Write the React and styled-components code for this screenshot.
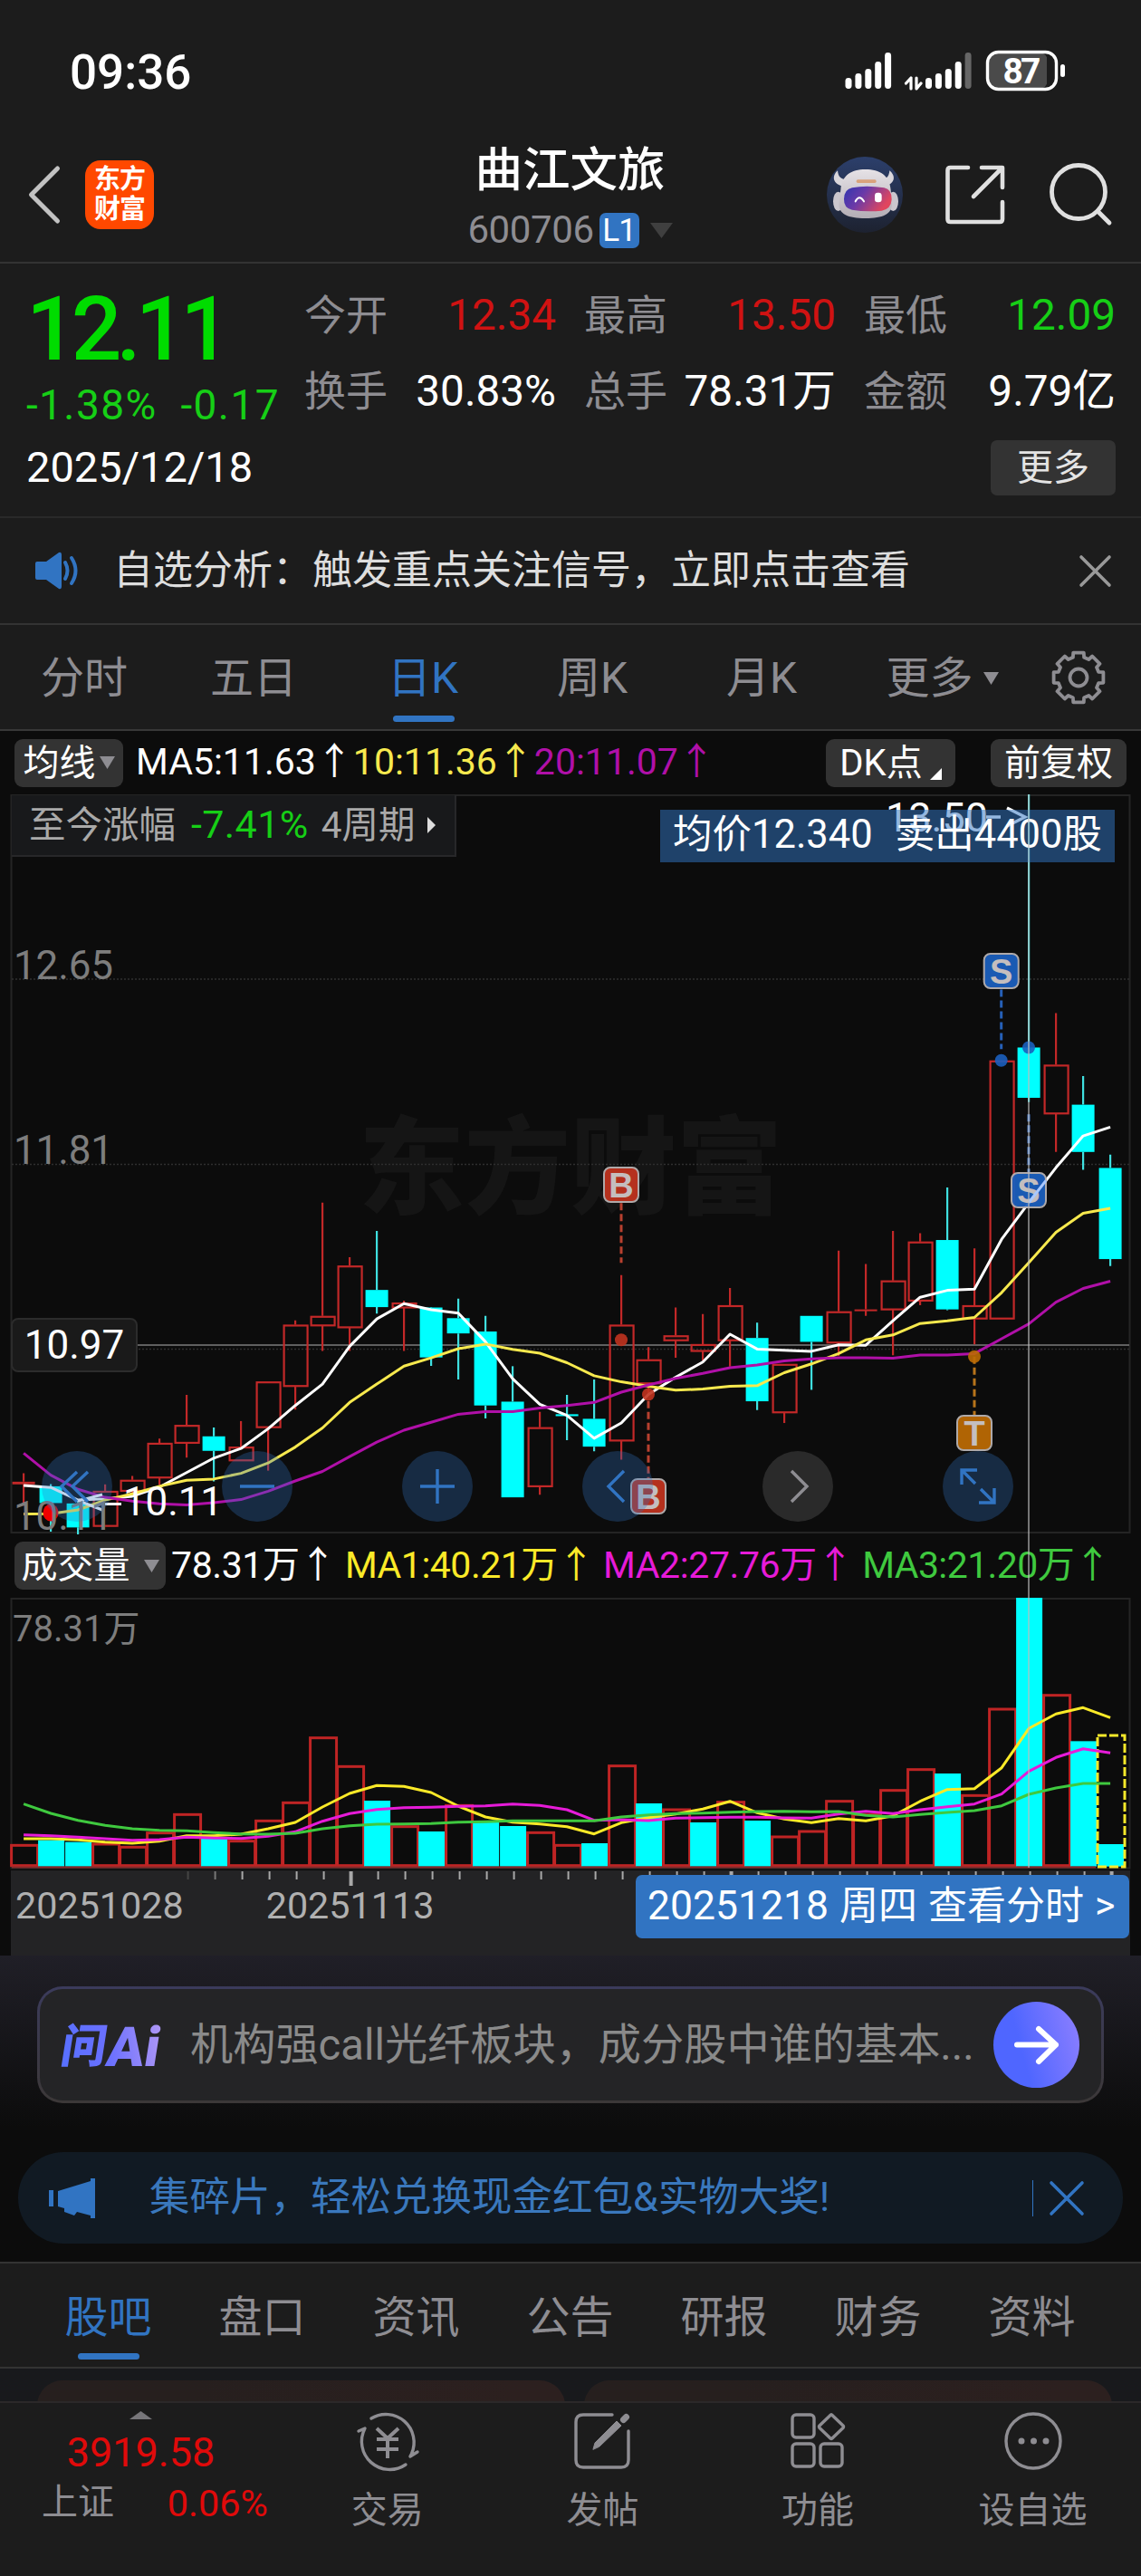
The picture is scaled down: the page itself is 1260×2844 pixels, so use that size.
import React from "react";
import styled, { createGlobalStyle } from "styled-components";

const BLUE = "#3174c2";
const RED = "#c22828";
const CYAN = "#00ffff";
const GREY = "#8e8d92";

const Global = createGlobalStyle`
  * { box-sizing: border-box; }
  body {
    margin: 0;
    background: #1c1c1c;
    color: #fff;
    font-family: Roboto, "Noto Sans CJK SC", sans-serif;
    -webkit-font-smoothing: antialiased;
  }
  svg { display: block; flex: none; overflow: visible; }
  svg text { font-family: Roboto, "Noto Sans CJK SC", sans-serif; }
`;

const Page = styled.div`
  width: 1260px;
  height: 2844px;
  overflow: hidden;
  display: flex;
  flex-direction: column;
  background: #1c1c1c;
  white-space: nowrap;
`;

const Text = styled.span`
  font-size: ${(p) => p.$size || 41}px;
  line-height: ${(p) => p.$line || 1.2};
  color: ${(p) => p.$color || "#fff"};
  font-weight: ${(p) => p.$weight || 400};
  letter-spacing: ${(p) => p.$track || 0}px;
`;

/* ---------- status bar ---------- */

const StatusBar = styled.div`
  height: 140px;
  padding: 0 84px 0 77px;
  display: flex;
  justify-content: space-between;
`;

const Clock = styled(Text)`
  padding-top: 49px;
`;

const StatusIcons = styled.div`
  padding-top: 52px;
`;

const BAR_TOPS = [34, 29, 24, 16, 6];

function Signal({ x, dim }) {
  return BAR_TOPS.map((top, i) => (
    <rect
      key={i}
      x={x + i * 10.9}
      y={top}
      width="7"
      height={46 - top}
      rx="3.4"
      fill={dim && i === 4 ? "#666" : "#fff"}
    />
  ));
}

function StatusGlyphs() {
  return (
    <svg width="246" height="52" viewBox="0 0 246 52">
      <Signal x={3.5} />
      <Signal x={92} dim />
      <path d="M76 34v12M76 34l-5.500 6M82 34v12l5-6" stroke="#fff" strokeWidth="3.200" fill="none" strokeLinecap="round" strokeLinejoin="round" />
      <rect x="161" y="6" width="66" height="40" rx="9" fill="#4a4a4a" />
      <rect x="226" y="8" width="8" height="36" fill="#1c1c1c" />
      <rect x="160.500" y="5.500" width="76" height="41" rx="12" fill="none" stroke="#fff" strokeWidth="3.400" />
      <rect x="241" y="19" width="5" height="14" rx="2.500" fill="#fff" />
      <text x="198.500" y="40" textAnchor="middle" fontSize="39" fontWeight="700" fill="#fff" textLength="42">87</text>
    </svg>
  );
}

/* ---------- title header ---------- */

const Header = styled.header`
  height: 151px;
  padding: 0 31px;
  display: grid;
  grid-template-columns: 1fr auto 1fr;
  align-items: center;
  border-bottom: 2px solid #333;
`;

const HeaderLeft = styled.div`
  display: flex;
  align-items: center;
  gap: 28px;
`;

const HeaderRight = styled.div`
  display: flex;
  align-items: center;
  justify-content: flex-end;
  gap: 47px;
`;

const BrandTile = styled.div`
  width: 76px;
  height: 76px;
  border-radius: 17px;
  background: #ff4800;
  display: flex;
  flex-direction: column;
  align-items: center;
  justify-content: center;
  font-size: 29px;
  line-height: 33px;
  font-weight: 700;
  letter-spacing: -1px;
`;

const TitleBlock = styled.div`
  padding: 13px 1px 0 0;
  display: flex;
  flex-direction: column;
  align-items: center;
`;

const CodeRow = styled.div`
  height: 66px;
  display: flex;
  align-items: center;
`;

const LevelBadge = styled.span`
  margin: 0 12px 0 6px;
  width: 44px;
  height: 39px;
  border-radius: 7px;
  background: ${BLUE};
  font-size: 35px;
  line-height: 39px;
  text-align: center;
  letter-spacing: -1px;
`;

function Caret({ w = 17, h = 14, color = GREY, up }) {
  return (
    <svg width={w} height={h}>
      <path d={up ? `M0 ${h}L${w / 2} 0L${w} ${h}Z` : `M0 0H${w}L${w / 2} ${h}Z`} fill={color} />
    </svg>
  );
}

function BackIcon() {
  return (
    <svg width="35" height="64" viewBox="0 0 35 64">
      <path d="M32.500 3L3.500 32L32.500 61" fill="none" stroke="#c2c2c2" strokeWidth="5" strokeLinecap="round" strokeLinejoin="round" />
    </svg>
  );
}

function RobotIcon() {
  return (
    <svg width="84" height="84" viewBox="0 0 252 252">
      <defs>
        <linearGradient id="rbg" x1="0" y1="0" x2="0" y2="1">
          <stop offset="0" stopColor="#2c3f6b" />
          <stop offset="1" stopColor="#1d2230" />
        </linearGradient>
        <linearGradient id="visor" x1="0" y1="0" x2="1" y2="0.4">
          <stop offset="0" stopColor="#2f35b0" />
          <stop offset="0.45" stopColor="#6a3aa8" />
          <stop offset="1" stopColor="#e0465e" />
        </linearGradient>
        <linearGradient id="shell" x1="0" y1="0" x2="0" y2="1">
          <stop offset="0" stopColor="#e6e2e6" />
          <stop offset="1" stopColor="#b3adb5" />
        </linearGradient>
      </defs>
      <circle cx="126" cy="126" r="126" fill="url(#rbg)" />
      <path d="M54 98C22 92 14 66 36 46c2 22 12 30 34 30zM190 98c34-6 42-32 18-52c-2 22-12 30-34 30z" fill="#d9d6db" />
      <ellipse cx="38" cy="148" rx="17" ry="32" fill="#cbc7ce" />
      <ellipse cx="220" cy="148" rx="17" ry="32" fill="#cbc7ce" />
      <path d="M46 110C50 62 80 42 128 42s80 20 84 68l4 46c0 34-30 48-88 48s-88-14-88-48z" fill="url(#shell)" />
      <rect x="98" y="76" width="66" height="11" rx="5" fill="#d9a27c" />
      <path d="M84 103Q130 94 190 103Q216 108 215 142Q213 174 182 179Q130 184 84 176Q56 170 57 140Q58 108 84 103Z" fill="url(#visor)" />
      <path d="M95 148q13-24 28 0" fill="none" stroke="#fff" strokeWidth="6" strokeLinecap="round" />
      <rect x="159" y="119" width="23" height="32" rx="10" fill="#fff" />
    </svg>
  );
}

function ShareIcon() {
  return (
    <svg width="68" height="68" viewBox="1 0 68 68">
      <path
        d="M26 4H6.500Q3.500 4 3.500 7V61Q3.500 64 6.500 64H61Q64 64 64 61V42M41 4H64V26M63 5L32 36"
        fill="none" stroke="#e0e0e0" strokeWidth="4.600" strokeLinecap="round" strokeLinejoin="round"
      />
    </svg>
  );
}

function SearchIcon() {
  return (
    <svg width="70" height="70" viewBox="0 0 70 70">
      <circle cx="32" cy="32" r="29.500" fill="none" stroke="#e0e0e0" strokeWidth="4.800" />
      <path d="M53 53L66 66" stroke="#e0e0e0" strokeWidth="4.800" strokeLinecap="round" />
    </svg>
  );
}

/* ---------- quote ---------- */

const Quote = styled.section`
  height: 281px;
  padding: 16px 28px 0 29px;
  border-bottom: 2px solid #292929;
`;

const QuoteTop = styled.div`
  display: flex;
  height: 174px;
`;

const PriceCol = styled.div`
  width: 307px;
  padding-top: 7px;
  display: flex;
  flex-direction: column;
`;

const ChangeRow = styled.div`
  display: flex;
  gap: 26px;
  height: 68px;
  align-items: center;
`;

const StatGrid = styled.div`
  flex: 1;
  height: 168px;
  display: grid;
  grid-template-columns: repeat(3, 1fr);
  grid-template-rows: 84px 84px;
  column-gap: 31px;
`;

const Stat = styled.div`
  display: flex;
  justify-content: space-between;
  align-items: center;
`;

const QuoteBottom = styled.div`
  height: 70px;
  display: flex;
  justify-content: space-between;
  align-items: center;
`;

const MoreButton = styled.button`
  border: 0;
  width: 138px;
  height: 61px;
  border-radius: 7px;
  background: #333;
  color: #e4e4e4;
  font: 400 40px/61px Roboto, "Noto Sans CJK SC", sans-serif;
  padding: 0;
`;

const STATS = [
  ["今开", "12.34", "#d01212"],
  ["最高", "13.50", "#d01212"],
  ["最低", "12.09", "#16cf16"],
  ["换手", "30.83%", "#fff"],
  ["总手", "78.31万", "#fff"],
  ["金额", "9.79亿", "#fff"],
];

/* ---------- notice ---------- */

const Notice = styled.div`
  height: 118px;
  padding: 0 33px 0 38px;
  display: flex;
  align-items: center;
  border-bottom: 2px solid #333;
`;

const NoticeText = styled(Text)`
  flex: 1;
  margin-left: 37px;
`;

function Cross({ size, color }) {
  return (
    <svg width={size} height={size}>
      <path d={`M2 2L${size - 2} ${size - 2}M${size - 2} 2L2 ${size - 2}`} stroke={color} strokeWidth="3.600" strokeLinecap="round" />
    </svg>
  );
}

function SpeakerIcon() {
  return (
    <svg width="50" height="42" viewBox="0 0 50 42">
      <path d="M3 11H13L27 1Q30 0 30 4V38Q30 42 27 41L13 31H3Q1 31 1 29V13Q1 11 3 11Z" fill={BLUE} />
      <path d="M34 12Q39 21 34 30M41 7Q50 21 41 35" fill="none" stroke={BLUE} strokeWidth="4" strokeLinecap="round" />
    </svg>
  );
}

/* ---------- tabs ---------- */

const PeriodTabs = styled.nav`
  height: 117px;
  display: grid;
  grid-template-columns: repeat(6, 187px) 138px;
  border-bottom: 2px solid #383838;
`;

const FeedTabs = styled.nav`
  height: 118px;
  padding: 0 35px;
  display: grid;
  grid-template-columns: repeat(7, 1fr);
  border-top: 2px solid #333;
  border-bottom: 2px solid #333;
`;

const Tab = styled.div`
  position: relative;
  display: flex;
  align-items: center;
  justify-content: center;
  gap: 11px;
  padding: ${(p) => p.$drop || 3}px ${(p) => (p.$shift ? 0 : 1)}px 0 ${(p) => (p.$shift ? 24 : 0)}px;
  font-size: 48px;
  line-height: 60px;
  color: ${(p) => (p.$active ? BLUE : GREY)};
  &::after {
    content: "";
    display: ${(p) => (p.$active ? "block" : "none")};
    position: absolute;
    bottom: 8px;
    left: calc(50% - 34px);
    width: 68px;
    height: 7px;
    border-radius: 4px;
    background: ${BLUE};
  }
`;

function gearPath(c, outer, inner) {
  const pts = [];
  for (let k = 0; k < 8; k++) {
    const a = (k * Math.PI) / 4 - Math.PI / 2;
    [[-0.27, inner], [-0.21, outer], [0.21, outer], [0.27, inner]].forEach(([d, r]) => {
      pts.push(`${(c + r * Math.cos(a + d)).toFixed(1)} ${(c + r * Math.sin(a + d)).toFixed(1)}`);
    });
  }
  return `M${pts.join("L")}Z`;
}

function GearIcon() {
  return (
    <svg width="62" height="62" viewBox="0 0 62 62">
      <path d={gearPath(31, 28, 23)} fill="none" stroke={GREY} strokeWidth="3.800" strokeLinejoin="round" />
      <circle cx="31" cy="31" r="9.500" fill="none" stroke={GREY} strokeWidth="3.800" />
    </svg>
  );
}

/* ---------- chart ---------- */

const ChartArea = styled.section`
  background: #0c0c0c;
`;

const Legend = styled.div`
  height: ${(p) => p.$h}px;
  padding: 0 16px;
  display: flex;
  align-items: center;
`;

const Chip = styled.div`
  width: ${(p) => p.$w}px;
  height: 53px;
  margin-left: ${(p) => p.$ml || 0}px;
  margin-right: ${(p) => p.$mr || 0}px;
  border-radius: 9px;
  background: #333;
  display: flex;
  align-items: center;
  justify-content: center;
  gap: ${(p) => p.$gap || 0}px;
  font-size: 40px;
  line-height: 53px;
`;

const Corner = styled.i`
  align-self: flex-end;
  margin-bottom: 8px;
  width: 0;
  height: 0;
  border-left: 13px solid transparent;
  border-bottom: 13px solid #fff;
`;

const Spring = styled.div`
  flex: 1;
`;

const Plot = styled.div`
  position: relative;
`;

const Crosshair = styled.div`
  position: absolute;
  left: 1135px;
  top: 0;
  width: 2px;
  height: 1185px;
  background: rgba(190, 190, 190, 0.6);
`;

const RangeBox = styled.div`
  position: absolute;
  left: 13px;
  top: 1px;
  width: 491px;
  height: 68px;
  padding-left: 19px;
  display: flex;
  align-items: center;
  background: #18191b;
  border: 2px solid #272729;
  border-width: 0 2px 2px 0;
`;

const RangeValue = styled(Text)`
  margin: 0 14px 0 17px;
`;

const RangeCount = styled(Text)`
  margin-right: 12px;
`;

const TradeTip = styled.div`
  position: absolute;
  left: 729px;
  top: 17px;
  width: 502px;
  height: 58px;
  padding: 0 14px;
  display: flex;
  justify-content: space-between;
  background: rgba(49, 116, 194, 0.52);
  font-size: 43.5px;
  line-height: 56px;
`;

const PriceTag = styled.div`
  position: absolute;
  left: 12px;
  top: 578px;
  width: 140px;
  height: 60px;
  border: 2px solid #2c2c2c;
  border-radius: 8px;
  background: #1a1a1a;
  font-size: 44px;
  line-height: 56px;
  text-align: center;
`;

const ChartControls = styled.div`
  position: absolute;
  left: 46px;
  top: 725px;
  display: flex;
  gap: 121px;
`;

const RoundButton = styled.div`
  width: 78px;
  height: 78px;
  border-radius: 50%;
  background: ${(p) => (p.$grey ? "rgba(112,112,112,.3)" : "rgba(49,116,194,.3)")};
  svg path {
    fill: none;
    stroke: ${(p) => (p.$grey ? "#8e8d92" : BLUE)};
    stroke-width: 3.4;
  }
`;

const CONTROLS = [
  { d: "M39 23L22 39L39 56M51 23L34 39L51 56" },
  { d: "M20 39H58" },
  { d: "M20 39H58M39 20V58" },
  { d: "M46 22L29 39L46 56" },
  { d: "M32 22L49 39L32 56", grey: true },
  { d: "M21 37V21H38M22 22L36 36M57 41V57H40M56 56L42 42" },
];

/* [direction, high, body top, body bottom, low] */
const CANDLES = [
  ["u", 1370, 1392, 1399, 1455], ["d", 1398, 1404, 1448, 1523], ["d", 1440, 1449, 1512, 1530],
  ["u", 1399, 1416, 1508, 1508], ["u", 1377, 1387, 1416, 1425], ["u", 1279, 1290, 1381, 1400],
  ["u", 1164, 1243, 1290, 1329], ["d", 1250, 1273, 1311, 1391], ["u", 1233, 1300, 1336, 1336],
  ["u", 1129, 1129, 1249, 1363], ["u", 969, 980, 1141, 1203], ["u", 660, 957, 982, 1049],
  ["u", 803, 825, 987, 1049], ["d", 734, 889, 934, 951], ["u", 917, 922, 935, 1049],
  ["d", 934, 935, 1066, 1088], ["d", 912, 963, 1003, 1124], ["d", 957, 998, 1192, 1226],
  ["d", 1089, 1182, 1433, 1433], ["u", 1209, 1249, 1404, 1426], ["d", 1164, 1215, 1220, 1283],
  ["d", 1124, 1227, 1300, 1312], ["u", 850, 980, 1284, 1334], ["u", 1039, 1071, 1134, 1160],
  ["u", 935, 1008, 1021, 1067], ["u", 952, 1031, 1049, 1074], ["u", 884, 929, 1021, 1090],
  ["d", 975, 1015, 1181, 1204], ["u", 1083, 1083, 1210, 1238], ["d", 957, 957, 1025, 1151],
  ["u", 786, 945, 1027, 1062], ["u", 821, 940, 941, 957], ["u", 734, 864, 940, 1060],
  ["u", 740, 762, 917, 929], ["d", 620, 758, 940, 942], ["u", 780, 929, 964, 1032],
  ["u", 287, 287, 964, 964], ["d", -411, 253, 385, 396], ["u", 163, 298, 426, 527],
  ["d", 328, 403, 527, 574], ["d", 534, 569, 808, 826],
];

const MA5 = [1402, 1407, 1440, 1437, 1430, 1406, 1368, 1330, 1305, 1253, 1192, 1136, 1037, 965, 925, 941, 950, 1025, 1122, 1189, 1218, 1278, 1238, 1163, 1118, 1078, 1005, 1044, 1047, 1050, 1033, 1034, 970, 908, 890, 887, 756, 660, 568, 485, 462];
const MA10 = [1477, 1476, 1466, 1440, 1424, 1404, 1388, 1385, 1370, 1343, 1301, 1251, 1184, 1136, 1089, 1067, 1043, 1031, 1045, 1055, 1080, 1114, 1130, 1142, 1152, 1149, 1142, 1140, 1106, 1083, 1056, 1020, 1007, 977, 970, 961, 896, 817, 738, 688, 675];
const MA20 = [1317, 1375, 1412, 1433, 1443, 1450, 1453, 1447, 1439, 1417, 1390, 1365, 1326, 1288, 1257, 1236, 1215, 1208, 1208, 1199, 1192, 1184, 1157, 1138, 1121, 1108, 1093, 1086, 1075, 1070, 1067, 1067, 1068, 1060, 1060, 1056, 1017, 978, 921, 885, 866];

const VOLUMES = [
  ["u", 1042], ["d", 1025], ["d", 1031], ["u", 1038], ["u", 1048], ["u", 1001], ["u", 940], ["d", 1020],
  ["u", 1028], ["u", 961], ["u", 901], ["u", 686], ["u", 781], ["d", 894], ["u", 980], ["d", 996],
  ["u", 910], ["d", 966], ["d", 978], ["u", 1000], ["u", 1042], ["d", 1035], ["u", 779], ["d", 903],
  ["u", 924], ["d", 966], ["u", 899], ["d", 960], ["u", 1014], ["u", 996], ["u", 896], ["u", 940],
  ["u", 860], ["u", 791], ["d", 804], ["u", 877], ["u", 591], ["d", 222], ["u", 545], ["d", 697], ["d", 1038],
];

const VMA5 = [1020, 1020, 1024, 1031, 1035, 1028, 1010, 1010, 1005, 987, 966, 915, 870, 844, 847, 867, 912, 948, 965, 971, 980, 1004, 967, 950, 938, 922, 896, 934, 955, 967, 953, 961, 944, 896, 857, 854, 785, 655, 607, 586, 619];
const VMA10 = [1007, 1010, 1015, 1020, 1025, 1023, 1015, 1018, 1019, 1012, 997, 962, 937, 923, 917, 916, 913, 911, 905, 910, 924, 959, 957, 960, 952, 950, 949, 949, 951, 952, 938, 929, 937, 924, 914, 905, 872, 797, 751, 722, 736];
const VMA20 = [905, 936, 959, 976, 987, 992, 994, 1000, 1004, 1005, 1002, 987, 977, 972, 971, 970, 965, 964, 961, 961, 961, 961, 948, 941, 937, 935, 932, 930, 929, 931, 930, 943, 948, 940, 933, 927, 911, 873, 852, 837, 837];

const cx = (i) => 26.1 + i * 30;
const priceY = (v) => v / 2.376 + 173;
const volumeY = (v) => v / 3 - 74;
const line = (data, y) => data.map((v, i) => `${cx(i).toFixed(1)},${y(v).toFixed(1)}`).join(" ");

function Candle({ i, c: [dir, hi, top, bottom, lo] }) {
  const x = cx(i);
  const up = dir === "u";
  const t = priceY(top);
  const b = priceY(bottom);
  const color = up ? RED : CYAN;
  const thin = b - t < 3.5;
  return (
    <g stroke={color} strokeWidth="2.2">
      <path d={`M${x} ${priceY(hi)}V${t}M${x} ${b}V${priceY(lo)}`} stroke={up ? RED : "#3fe0e0"} />
      {thin ? (
        <rect x={x - 12.5} y={t} width="25" height={Math.max(2, b - t)} fill={color} stroke="none" />
      ) : up ? (
        <rect x={x - 12.5} y={t + 1} width="26" height={b - t - 1} fill="none" />
      ) : (
        <rect x={x - 12.5} y={t} width="25" height={b - t} fill={color} stroke="none" />
      )}
    </g>
  );
}

const MARKS = [
  { t: "B", x: 686, box: 411, dot: [686, 1020], from: 661, to: 818, fill: "#c0331f", line: "#b8402f" },
  { t: "B", x: 716, box: 755, dot: [716, 1163], from: 1180, to: 1384, fill: "#c0331f", line: "#b8402f" },
  { t: "S", x: 1105.7, box: 175, dot: [1105.7, 287], from: 101, to: 257, fill: "#1b5fbe", line: "#2660b8" },
  { t: "S", x: 1136, box: 417, dot: [1136, 253], from: 428, to: 580, fill: "#1b5fbe", line: "#4a7fd0" },
  { t: "T", x: 1076, box: 685, dot: [1076, 1064], from: 1064, to: 1217, fill: "#bb6a04", line: "#b8741a" },
];

const MarkLetter = styled.text`
  && { font-family: "Liberation Sans", Arial, sans-serif; }
  font-size: 38px;
  font-weight: 700;
  fill: #c4bebe;
`;

function Mark({ m }) {
  return (
    <g>
      <path d={`M${m.x} ${priceY(m.from)}V${priceY(m.to)}`} stroke={m.line} strokeWidth="3" strokeDasharray="8 4" />
      <circle cx={m.dot[0]} cy={priceY(m.dot[1])} r="7" fill={m.fill} opacity="0.9" />
      <rect x={m.x - 19} y={m.box + 1} width="38" height="38" rx="7" fill={m.fill} stroke="#b9b3b3" strokeWidth="2" opacity="0.94" />
      <MarkLetter x={m.x} y={m.box + 33.5} textAnchor="middle">{m.t}</MarkLetter>
    </g>
  );
}

function PriceChart() {
  return (
    <svg width="1260" height="816" viewBox="0 0 1260 816">
      <text x="396" y="454" fontSize="117" fontWeight="900" fill="#151515">东方财富</text>
      <path d="M12.500 1H1247.500V815H12.500Z" fill="none" stroke="#242424" strokeWidth="2" />
      <path d="M13 204H1247M13 408.500H1247M13 612.500H1247" stroke="#2f2f2f" strokeWidth="1.500" strokeDasharray="2 2" />
      <path d="M151 608H1247" stroke="#7d7d7d" strokeWidth="1.600" />
      {CANDLES.map((c, i) => <Candle key={i} i={i} c={c} />)}
      <g fill="none" strokeWidth="3" strokeLinejoin="round">
        <polyline points={line(MA5, priceY)} stroke="#fff" />
        <polyline points={line(MA10, priceY)} stroke="#f7e94e" />
        <polyline points={line(MA20, priceY)} stroke="#b010a8" />
      </g>
      {MARKS.map((m, i) => <Mark key={i} m={m} />)}
      <path d={`M1136 ${priceY(660)}L1155 ${priceY(602)}`} stroke="#a9c8ff" strokeWidth="3" />
      <ellipse cx="56" cy="793" rx="8.500" ry="9.500" fill="#f00000" />
      <path d="M113 773L87 780L113 790M116 783.500H134" fill="none" stroke="#fff" strokeWidth="3" />
      <g fontSize="44" fill="#7d7d7d">
        <text x="15" y="204" textLength="110">12.65</text>
        <text x="15" y="408" textLength="110">11.81</text>
        <text x="15" y="812" textLength="110">10.11</text>
      </g>
      <text x="136" y="796" fontSize="44" fill="#fff" textLength="110">10.11</text>
      <text x="978" y="41" fontSize="45" fill="#fff">13.50</text>
      <path d="M1089 25H1105M1112 15L1132 25L1112 35" fill="none" stroke="#fff" strokeWidth="3.400" />
    </svg>
  );
}

function VolumeChart() {
  const base = volumeY(1112);
  return (
    <svg width="1260" height="301" viewBox="0 0 1260 301">
      <path d="M12.500 1H1247.500V298.500H12.500Z" fill="none" stroke="#242424" strokeWidth="2" />
      {VOLUMES.map(([dir, v], i) => {
        const y = volumeY(v);
        return dir === "u" ? (
          <rect key={i} x={cx(i) - 13.5} y={y} width="29" height={base - y - 1} fill="none" stroke="#bf2424" strokeWidth="3" />
        ) : (
          <rect key={i} x={cx(i) - 14} y={y} width="29" height={base - y} fill={CYAN} />
        );
      })}
      <path d="M13 297.500H1210" stroke="#8c2b2b" strokeWidth="2" />
      <rect x="1212" y="152" width="30" height="145" fill="none" stroke="#f7e92a" strokeWidth="3" strokeDasharray="10 3" />
      <g fill="none" strokeWidth="3" strokeLinejoin="round">
        <polyline points={line(VMA5, volumeY)} stroke="#fbea28" />
        <polyline points={line(VMA10, volumeY)} stroke="#e61bd8" />
        <polyline points={line(VMA20, volumeY)} stroke="#3fc93f" />
      </g>
      <text x="14" y="48" fontSize="40" fill="#7d7d7d">78.31万</text>
    </svg>
  );
}

const Axis = styled.div`
  position: relative;
  height: 94px;
  margin: 0 12px;
  background: #232325;
`;

const AxisDates = styled.div`
  height: 78px;
  margin-top: -16px;
  padding-left: 5px;
  display: flex;
  align-items: center;
  gap: 91px;
`;

const DayButton = styled.div`
  position: absolute;
  right: 1px;
  top: 5px;
  width: 545px;
  height: 70px;
  border-radius: 7px;
  background: ${BLUE};
  padding-left: 13px;
  display: flex;
  gap: 12px;
`;

function Ticks() {
  return (
    <svg width="1236" height="17" viewBox="12 0 1236 17">
      {VOLUMES.map((_, i) => {
        if (i < 6) return null;
        const major = i === 12 || i === 26 || i === 40;
        return (
          <rect
            key={i}
            x={cx(i) + 0.5 - (major ? 1 : 0)}
            y="1"
            width={major ? 4 : 2}
            height={i === 12 ? 16 : 9}
            fill={i === 6 ? "#444" : i === 7 ? "#777" : "#a8a8a8"}
          />
        );
      })}
    </svg>
  );
}

/* ---------- assistant and promo ---------- */

const Promo = styled.section`
  height: 338px;
  padding: 34px 20px 0;
  background: linear-gradient(#201f27, #0c0c0c 190px);
`;

const AskCard = styled.div`
  height: 129px;
  margin: 0 21px 54px;
  padding: 0 24px 0 23px;
  border: 3px solid transparent;
  border-radius: 28px;
  background: linear-gradient(#242426, #242426) padding-box, linear-gradient(#3b3b5c, #3c3838) border-box;
  display: flex;
  align-items: center;
`;

const AskText = styled(Text)`
  width: 884px;
  margin-left: 21px;
  padding-top: 2px;
`;

const GoButton = styled.div`
  width: 95px;
  height: 95px;
  margin-left: auto;
  border-radius: 50%;
  background: linear-gradient(75deg, #4f66ff 35%, #8f80ff);
`;

const Banner = styled.div`
  height: 101px;
  padding: 0 43px 0 34px;
  border-radius: 50px;
  background: #111a23;
  display: flex;
  align-items: center;
`;

const BannerText = styled(Text)`
  flex: 1;
  margin-left: 60px;
`;

const Divider = styled.i`
  width: 1px;
  height: 40px;
  margin-right: 18px;
  background: ${BLUE};
`;

function AskLogo() {
  return (
    <svg width="122" height="72" viewBox="0 -6 122 72">
      <defs>
        <linearGradient id="ask" gradientUnits="userSpaceOnUse" x1="0" y1="40" x2="112" y2="10">
          <stop offset="0" stopColor="#5570ff" />
          <stop offset="0.5" stopColor="#6a70ff" />
          <stop offset="1" stopColor="#ad96f5" />
        </linearGradient>
      </defs>
      <g transform="skewX(-9)" fill="url(#ask)" fontWeight="900">
        <text x="6" y="49" fontSize="51" textLength="50" lengthAdjust="spacingAndGlyphs">问</text>
        <text x="57" y="53" fontSize="61" textLength="58" lengthAdjust="spacingAndGlyphs">Ai</text>
      </g>
    </svg>
  );
}

function MegaphoneIcon() {
  return (
    <svg width="51" height="44" viewBox="0 0 51 44" fill={BLUE}>
      <path d="M0 13H5V31H0ZM10 14L46 3V0H51V44H46V41L31 37L28 41L17 37V33L10 31Z" />
    </svg>
  );
}

/* ---------- feed preview ---------- */

const FeedStrip = styled.div`
  height: 36px;
  padding: 13px 32px 0 41px;
  display: flex;
  gap: 21px;
  overflow: hidden;
  background: #18191c;
`;

const FeedCard = styled.div`
  flex: 1;
  height: 80px;
  border-radius: 28px;
  background: linear-gradient(90deg, #261f1e 30%, #2c201f 90%);
`;

/* ---------- bottom bar ---------- */

const BottomBar = styled.footer`
  height: 193px;
  border-top: 2px solid #2b2829;
  display: grid;
  grid-template-columns: 309px repeat(4, 237.6px);
`;

const IndexCell = styled.div`
  display: flex;
  flex-direction: column;
  align-items: center;
  padding: 9px 0 0 2px;
`;

const IndexRow = styled.div`
  width: 307px;
  margin-top: -6px;
  padding: 0 13px 0 44px;
  display: flex;
  justify-content: space-between;
`;

const NavItem = styled.div`
  display: flex;
  flex-direction: column;
  align-items: center;
  padding-top: 5px;
  gap: 10px;
`;

const NAV = [
  ["交易", (
    <g key="t">
      <path d="M19 12A31 31 0 0 1 63.500 51L62 54M57 63A31 31 0 0 1 12 23L5 26M62 54L70 49" />
      <path d="M25 23L37 34L49 23M25 35H49M25 46H49M37 34V56" strokeWidth="4" strokeLinecap="butt" />
    </g>
  )],
  ["发帖", (
    <g key="p">
      <path d="M48 8H16Q8 8 8 16V58Q8 66 16 66H58Q66 66 66 58V26" />
      <path d="M27 46L29 39L53 15L58 20L34 43Z" fill={GREY} strokeWidth="1" />
      <path d="M60.500 13.500L63.500 10.500" strokeWidth="7" />
    </g>
  )],
  ["功能", (
    <g key="f">
      <rect x="9" y="8" width="24" height="25" rx="4" />
      <rect x="9" y="40" width="24" height="25" rx="4" />
      <rect x="40" y="40" width="24" height="25" rx="4" />
      <path d="M51 8.500Q52 7 53 8.500L65 20Q66 21 65 22.500L53 34Q52 35 51 34L39 22.500Q38 21 39 20Z" />
    </g>
  )],
  ["设自选", (
    <g key="m">
      <circle cx="37" cy="37" r="30" />
      <g fill={GREY} stroke="none">
        <circle cx="24" cy="37" r="3.500" />
        <circle cx="37.500" cy="37" r="3.500" />
        <circle cx="51" cy="37" r="3.500" />
      </g>
    </g>
  )],
];

export default function App() {
  return (
    <Page>
      <Global />
      <StatusBar>
        <Clock $size={53} $weight={500}>09:36</Clock>
        <StatusIcons><StatusGlyphs /></StatusIcons>
      </StatusBar>

      <Header>
        <HeaderLeft>
          <BackIcon />
          <BrandTile><span>东方</span><span>财富</span></BrandTile>
        </HeaderLeft>
        <TitleBlock>
          <Text $size={52.5} $line="66px" $weight={500}>曲江文旅</Text>
          <CodeRow>
            <Text $size={42} $color={GREY} $track={-0.4}>600706</Text>
            <LevelBadge>L1</LevelBadge>
            <Caret w={25} h={17} color="#3f3f3f" />
          </CodeRow>
        </TitleBlock>
        <HeaderRight>
          <RobotIcon />
          <ShareIcon />
          <SearchIcon />
        </HeaderRight>
      </Header>

      <Quote>
        <QuoteTop>
          <PriceCol>
            <Text $size={98} $line="100px" $color="#00dc00" $weight={500} $track={-6}>12.11</Text>
            <ChangeRow>
              <Text $size={46} $color="#16cf16" $track={1.4}>-1.38%</Text>
              <Text $size={46} $color="#16cf16" $track={1.4}>-0.17</Text>
            </ChangeRow>
          </PriceCol>
          <StatGrid>
            {STATS.map(([label, value, color]) => (
              <Stat key={label}>
                <Text $size={46} $color={GREY}>{label}</Text>
                <Text $size={47.7} $color={color}>{value}</Text>
              </Stat>
            ))}
          </StatGrid>
        </QuoteTop>
        <QuoteBottom>
          <Text $size={47}>2025/12/18</Text>
          <MoreButton>更多</MoreButton>
        </QuoteBottom>
      </Quote>

      <Notice>
        <SpeakerIcon />
        <NoticeText $size={44} $color="#dedede">自选分析：触发重点关注信号，立即点击查看</NoticeText>
        <Cross size={35} color="#999" />
      </Notice>

      <PeriodTabs>
        <Tab>分时</Tab>
        <Tab>五日</Tab>
        <Tab $active>日K</Tab>
        <Tab>周K</Tab>
        <Tab>月K</Tab>
        <Tab $shift>更多<Caret /></Tab>
        <Tab $drop={1}><GearIcon /></Tab>
      </PeriodTabs>

      <ChartArea>
        <Legend $h={70}>
          <Chip $w={120} $mr={14} $gap={4}>均线<Caret /></Chip>
          <Text>MA5:11.63↑</Text>
          <Text $color="#f7e94e">10:11.36↑</Text>
          <Text $color="#b010a8">20:11.07↑</Text>
          <Spring />
          <Chip $w={143} $gap={8}>DK点<Corner /></Chip>
          <Chip $w={150} $ml={39}>前复权</Chip>
        </Legend>

        <Plot>
          <PriceChart />
          <RangeBox>
            <Text $size={40.5} $color="#a9a9a9">至今涨幅</Text>
            <RangeValue $size={43} $color="#16cf16" $track={0.4}>-7.41%</RangeValue>
            <RangeCount $size={40.5} $color="#a9a9a9">4周期</RangeCount>
            <svg width="12" height="20"><path d="M2 1V19L11 10Z" fill="#ddd" /></svg>
          </RangeBox>
          <PriceTag>10.97</PriceTag>
          <ChartControls>
            {CONTROLS.map((c, i) => (
              <RoundButton key={i} $grey={c.grey}>
                <svg width="78" height="78"><path d={c.d} /></svg>
              </RoundButton>
            ))}
          </ChartControls>
          <TradeTip><span>均价12.340</span><span>卖出4400股</span></TradeTip>

          <Legend $h={71}>
            <Chip $w={167} $mr={6} $gap={15}>成交量<Caret /></Chip>
            <Text $track={-0.4}>78.31万↑&nbsp;</Text>
            <Text $color="#fbea28" $track={-0.5}>MA1:40.21万↑&nbsp;</Text>
            <Text $color="#e61bd8" $track={-0.4}>MA2:27.76万↑&nbsp;</Text>
            <Text $color="#3fc93f" $track={-0.6}>MA3:21.20万↑</Text>
          </Legend>
          <VolumeChart />
          <Crosshair />
        </Plot>

        <Axis>
          <Ticks />
          <AxisDates>
            <Text $size={41.3} $color="#b0b0b0">20251028</Text>
            <Text $size={41.3} $color="#b0b0b0">20251113</Text>
          </AxisDates>
          <DayButton>
            <Text $size={44.5} $line="69px">20251218</Text>
            <Text $size={43} $line="68px">周四</Text>
            <Text $size={43} $line="68px">查看分时</Text>
            <Text $size={43} $line="66px">&gt;</Text>
          </DayButton>
        </Axis>
      </ChartArea>

      <Promo>
        <AskCard>
          <AskLogo />
          <AskText $size={47.2} $color="#8a8a8a">机构强call光纤板块，成分股中谁的基本...</AskText>
          <GoButton>
            <svg width="95" height="95">
              <path d="M26 47.500H69M50 30L69 47.500L50 66" fill="none" stroke="#fff" strokeWidth="6" strokeLinecap="round" strokeLinejoin="round" />
            </svg>
          </GoButton>
        </AskCard>
        <Banner>
          <MegaphoneIcon />
          <BannerText $size={44.5} $color="#3a78bd">集碎片，轻松兑换现金红包&amp;实物大奖!</BannerText>
          <Divider />
          <Cross size={38} color={BLUE} />
        </Banner>
      </Promo>

      <FeedTabs>
        {["股吧", "盘口", "资讯", "公告", "研报", "财务", "资料"].map((t, i) => (
          <Tab key={t} $drop={6} $active={i === 0}>{t}</Tab>
        ))}
      </FeedTabs>

      <FeedStrip>
        <FeedCard />
        <FeedCard />
      </FeedStrip>

      <BottomBar>
        <IndexCell>
          <Caret w={25} h={9} color="#77767a" up />
          <Text $size={45} $line="74px" $color="#e00a0a">3919.58</Text>
          <IndexRow>
            <Text $size={40} $color={GREY}>上证</Text>
            <Text $size={41.5} $color="#e00a0a">0.06%</Text>
          </IndexRow>
        </IndexCell>
        {NAV.map(([label, art]) => (
          <NavItem key={label}>
            <svg width="74" height="74" viewBox="0 0 74 74" fill="none" stroke={GREY} strokeWidth="3.4" strokeLinecap="round" strokeLinejoin="round">
              {art}
            </svg>
            <Text $size={40} $line="60px" $color={GREY}>{label}</Text>
          </NavItem>
        ))}
      </BottomBar>
    </Page>
  );
}
